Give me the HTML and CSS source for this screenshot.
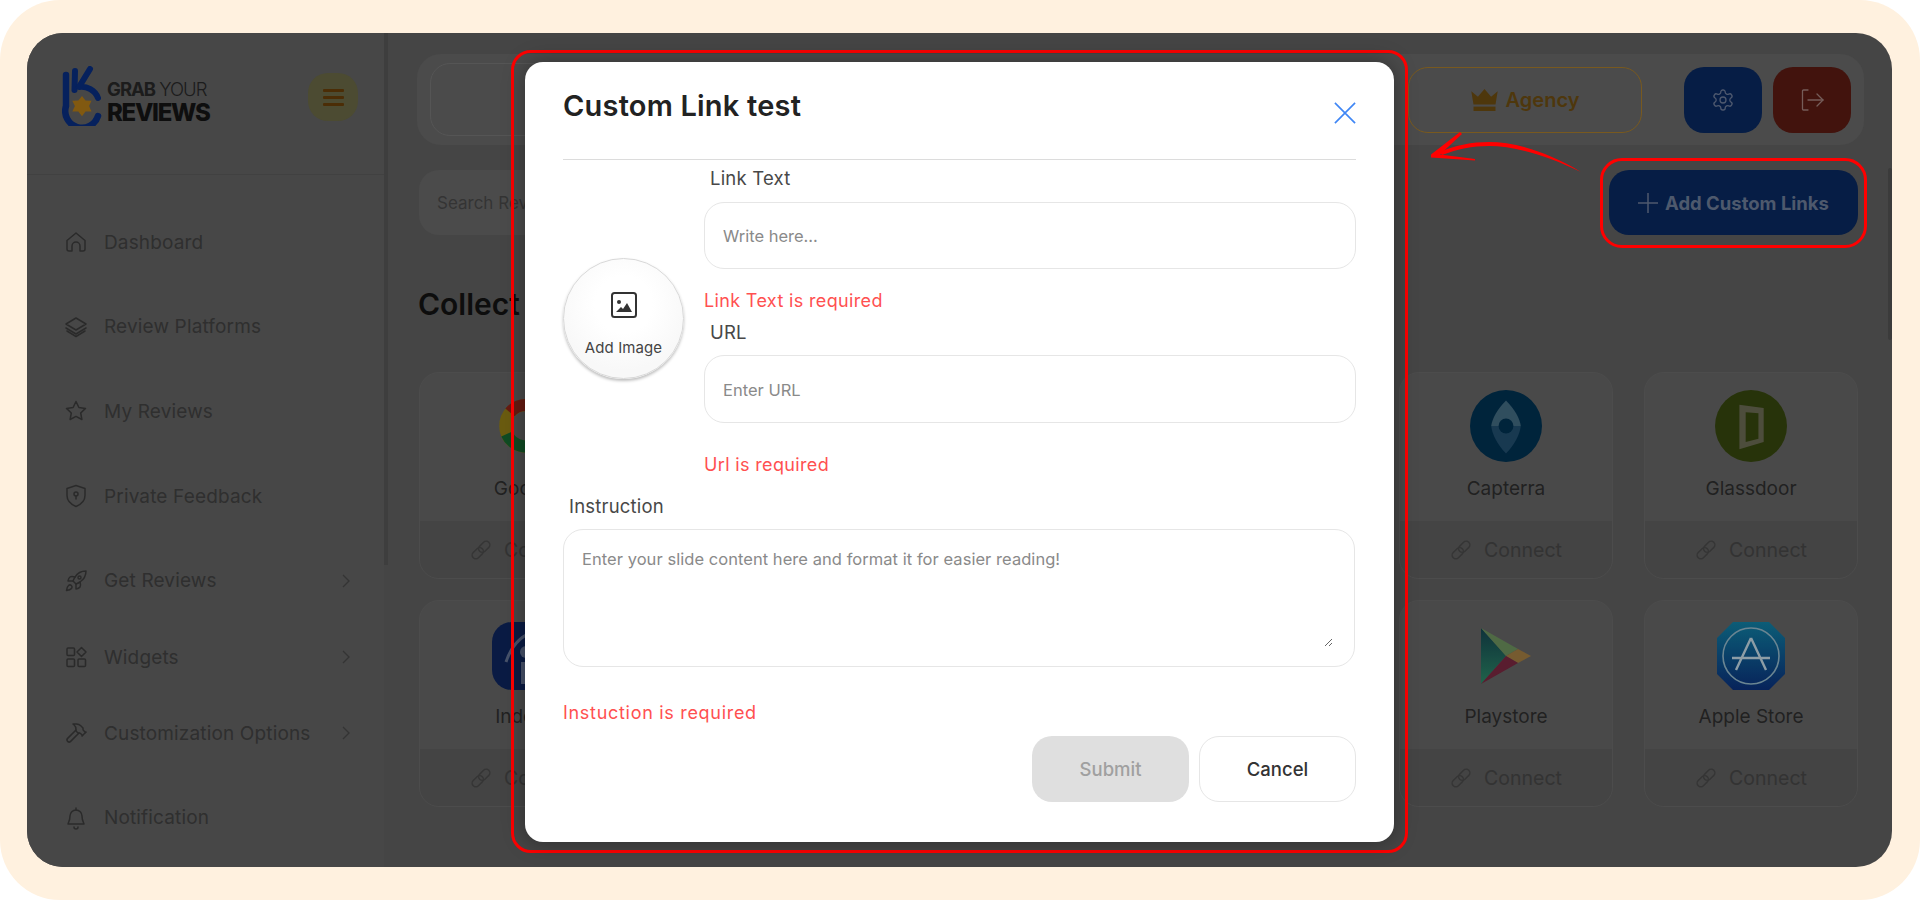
FILE: index.html
```html
<!DOCTYPE html>
<html lang="en">
<head>
<meta charset="utf-8">
<title>Custom Link</title>
<link rel="stylesheet" href="styles.css">
</head>
<body>
<div class="canvas">
  <div class="frame">
    <aside class="sidebar">
      <div class="brand">
        <div class="logo">
          <svg class="logo-mark" viewBox="0 0 40 60" fill="none">
            <path d="M4 9V40A16.5 16.5 0 0 0 36 50" stroke="#08286f" stroke-width="6.5" stroke-linecap="round"/>
            <path d="M13 5L12.500 24" stroke="#08286f" stroke-width="6" stroke-linecap="round"/>
            <path d="M28 3L17 21C25 20 33 24 36 32" stroke="#08286f" stroke-width="6" stroke-linecap="round" stroke-linejoin="round"/>
            <path d="M20 30l3.500 4.500 6 .3-2.400 5.200 2.400 5.400-6 .2-3.500 4.600-3.700-4.600-6-.2 2.600-5.400-2.600-5.200 6-.3z" fill="#9a6a14"/>
          </svg>
          <div class="logo-text">
            <div class="logo-top"><b>GRAB</b> YOUR</div>
            <div class="logo-bottom">REVIEWS</div>
          </div>
        </div>
        <div class="burger"><span></span><span></span><span></span></div>
      </div>
      <nav class="menu">
        <div class="menu-item"><svg class="ico" viewBox="0 0 24 24"><path d="M3 10.5 12 3l9 7.5V19a2 2 0 0 1-2 2h-3v-5a4 4 0 0 0-8 0v5H5a2 2 0 0 1-2-2z"/></svg><span>Dashboard</span></div>
        <div class="menu-item"><svg class="ico" viewBox="0 0 24 24"><path d="M12 3 2 9l10 6 10-6z"/><path d="M2 13l10 6 10-6"/><path d="M3 16l9 5.500 9-5.500"/></svg><span>Review Platforms</span></div>
        <div class="menu-item"><svg class="ico" viewBox="0 0 24 24"><path d="M12 2.500l2.900 6 6.600.9-4.800 4.600 1.200 6.500L12 17.400l-5.900 3.100 1.200-6.500L2.500 9.400l6.600-.9z"/></svg><span>My Reviews</span></div>
        <div class="menu-item"><svg class="ico" viewBox="0 0 24 24"><path d="M12 1.500l9 3v7c0 5-3.700 8.800-9 11-5.300-2.200-9-6-9-11v-7z"/><circle cx="12" cy="10" r="2"/><path d="M12 12v3"/></svg><span>Private Feedback</span></div>
        <div class="menu-item"><svg class="ico" viewBox="0 0 24 24"><path d="M4.500 16.500c-1.500 1.260-2 5-2 5s3.740-.5 5-2c.71-.84.7-2.130-.09-2.910a2.180 2.180 0 0 0-2.910-.09z"/><path d="m12 15-3-3a22 22 0 0 1 2-3.950A12.880 12.880 0 0 1 22 2c0 2.720-.78 7.500-6 11a22.350 22.350 0 0 1-4 2z"/><path d="M9 12H4s.55-3.030 2-4c1.620-1.080 5 0 5 0"/><path d="M12 15v5s3.030-.55 4-2c1.080-1.620 0-5 0-5"/><circle cx="15.500" cy="8.500" r="1.500"/></svg><span>Get Reviews</span><svg class="chev" viewBox="0 0 10 16"><path d="M2 2l6 6-6 6"/></svg></div>
        <div class="menu-item menu-near"><svg class="ico" viewBox="0 0 24 24"><rect x="3" y="3" width="7.500" height="7.500" rx="1"/><path d="M17.500 2.500l4.500 4.500-4.500 4.500L13 7z"/><rect x="3" y="14" width="7.500" height="7.500" rx="1"/><rect x="14" y="14" width="7.500" height="7.500" rx="1"/></svg><span>Widgets</span><svg class="chev" viewBox="0 0 10 16"><path d="M2 2l6 6-6 6"/></svg></div>
        <div class="menu-item menu-nearer"><svg class="ico" viewBox="0 0 24 24"><path d="m15 12-8.373 8.373a1 1 0 1 1-3-3L12 9"/><path d="m18 15 4-4"/><path d="m21.500 11.500-1.914-1.914A2 2 0 0 1 19 8.172V7l-2.260-2.260a6 6 0 0 0-4.202-1.756L9 2.960l.92.82A6.180 6.180 0 0 1 12 8.400V10l2 2h1.172a2 2 0 0 1 1.414.586L18.500 14.500"/></svg><span>Customization Options</span><svg class="chev" viewBox="0 0 10 16"><path d="M2 2l6 6-6 6"/></svg></div>
        <div class="menu-item"><svg class="ico" viewBox="0 0 24 24"><path d="M6 10a6 6 0 0 1 12 0c0 5 2 7 2 8H4c0-1 2-3 2-8"/><path d="M12 2v2"/><path d="M10 21a2 2 0 0 0 4 0"/></svg><span>Notification</span></div>
      </nav>
      <div class="side-thumb"></div>
    </aside>
    <main class="main">
      <header class="topbar">
        <div class="top-field"></div>
        <div class="agency">
          <svg class="crown" viewBox="0 0 24 20"><path d="M0 2l6 5 6-7 6 7 6-5-2 12H2z"/><rect x="2" y="16" width="20" height="4"/></svg>
          <span>Agency</span>
        </div>
        <div class="square-btn square-blue"><svg class="ico-btn" viewBox="0 0 24 24"><path d="M12.220 2h-.44a2 2 0 0 0-2 2v.18a2 2 0 0 1-1 1.730l-.43.25a2 2 0 0 1-2 0l-.15-.08a2 2 0 0 0-2.730.73l-.22.38a2 2 0 0 0 .73 2.730l.15.1a2 2 0 0 1 1 1.720v.51a2 2 0 0 1-1 1.740l-.15.09a2 2 0 0 0-.73 2.730l.22.38a2 2 0 0 0 2.730.73l.15-.08a2 2 0 0 1 2 0l.43.25a2 2 0 0 1 1 1.730V20a2 2 0 0 0 2 2h.44a2 2 0 0 0 2-2v-.18a2 2 0 0 1 1-1.730l.43-.25a2 2 0 0 1 2 0l.15.08a2 2 0 0 0 2.730-.73l.22-.39a2 2 0 0 0-.73-2.730l-.15-.08a2 2 0 0 1-1-1.740v-.5a2 2 0 0 1 1-1.740l.15-.09a2 2 0 0 0 .73-2.730l-.22-.38a2 2 0 0 0-2.730-.73l-.15.08a2 2 0 0 1-2 0l-.43-.25a2 2 0 0 1-1-1.730V4a2 2 0 0 0-2-2z"/><circle cx="12" cy="12" r="3"/></svg></div>
        <div class="square-btn square-red"><svg class="ico-btn" viewBox="0 0 24 24"><path d="M8 2H3.500a1 1 0 0 0-1 1v18a1 1 0 0 0 1 1H8"/><path d="M8 12h15"/><path d="M17 6l6 6-6 6"/></svg></div>
      </header>
      <div class="toolbar">
        <div class="search">Search Reviews</div>
        <div class="add-btn"><svg class="plus" viewBox="0 0 20 20"><path d="M10 0v20M0 10h20"/></svg><span>Add Custom Links</span></div>
      </div>
      <h1 class="heading">Collect Reviews</h1>
      <section class="cards">
        <article class="card col-a">
          <div class="card-body">
            <svg class="logo-ic" viewBox="-11 -11 90 90" fill="none"><circle cx="34" cy="34" r="26" stroke="#7f6d14" stroke-width="15"/><path d="M14 17A26 26 0 0 1 56 20" stroke="#7a2015" stroke-width="15"/><path d="M10 44A26 26 0 0 0 54 50" stroke="#145a2a" stroke-width="15"/></svg>
            <div class="card-name">Google</div>
          </div>
          <div class="card-foot"><svg class="link" viewBox="0 0 24 24"><g transform="rotate(-45 12 12)"><rect x="0" y="8" width="14" height="8" rx="4"/><rect x="10" y="8" width="14" height="8" rx="4"/></g></svg><span>Connect</span></div>
        </article>
        <article class="card col-e">
          <div class="card-body">
            <svg class="logo-ic" viewBox="0 0 68 68"><circle cx="34" cy="34" r="34" fill="#002b47"/><path d="M34 10C42 18 47 27 48 34H20C21 27 26 18 34 10z" fill="#3a5d70"/><path d="M34 60C42 52 47 42 48 34H20C21 42 26 52 34 60z" fill="#1d4560"/><circle cx="34" cy="34" r="7" fill="#002b47"/></svg>
            <div class="card-name">Capterra</div>
          </div>
          <div class="card-foot"><svg class="link" viewBox="0 0 24 24"><g transform="rotate(-45 12 12)"><rect x="0" y="8" width="14" height="8" rx="4"/><rect x="10" y="8" width="14" height="8" rx="4"/></g></svg><span>Connect</span></div>
        </article>
        <article class="card col-f">
          <div class="card-body">
            <svg class="logo-ic" viewBox="0 0 68 68"><circle cx="34" cy="34" r="34" fill="#2f3d0c"/><path d="M23 14l23 3v32l-23 7z" fill="#5c5c48"/><path d="M29 21l12 1v24l-12 3z" fill="#2f3d0c"/></svg>
            <div class="card-name">Glassdoor</div>
          </div>
          <div class="card-foot"><svg class="link" viewBox="0 0 24 24"><g transform="rotate(-45 12 12)"><rect x="0" y="8" width="14" height="8" rx="4"/><rect x="10" y="8" width="14" height="8" rx="4"/></g></svg><span>Connect</span></div>
        </article>
        <article class="card col-a">
          <div class="card-body">
            <svg class="logo-ic" viewBox="-2 -4 72 72"><rect width="68" height="68" rx="20" fill="#0d2152"/><path d="M14 40C20 22 32 10 50 8" fill="none" stroke="#55627f" stroke-width="3"/><circle cx="34" cy="30" r="6" fill="#55627f"/><rect x="29" y="40" width="10" height="22" fill="#55627f"/></svg>
            <div class="card-name">Indeed</div>
          </div>
          <div class="card-foot"><svg class="link" viewBox="0 0 24 24"><g transform="rotate(-45 12 12)"><rect x="0" y="8" width="14" height="8" rx="4"/><rect x="10" y="8" width="14" height="8" rx="4"/></g></svg><span>Connect</span></div>
        </article>
        <article class="card col-e">
          <div class="card-body">
            <svg class="logo-ic" viewBox="-2 -4 72 72">
              <defs><linearGradient id="pg" x1="0" y1="0" x2="0" y2="1"><stop offset="0" stop-color="#123c46"/><stop offset="1" stop-color="#27775a"/></linearGradient></defs>
              <path d="M9 6L34 34 9 62z" fill="url(#pg)"/><path d="M9 6L46 27 34 34z" fill="#5f7f52"/><path d="M46 27L59 34 46 41 34 34z" fill="#8d6d3a"/><path d="M9 62L46 41 34 34z" fill="#6a2338"/>
            </svg>
            <div class="card-name">Playstore</div>
          </div>
          <div class="card-foot"><svg class="link" viewBox="0 0 24 24"><g transform="rotate(-45 12 12)"><rect x="0" y="8" width="14" height="8" rx="4"/><rect x="10" y="8" width="14" height="8" rx="4"/></g></svg><span>Connect</span></div>
        </article>
        <article class="card col-f">
          <div class="card-body">
            <svg class="logo-ic" viewBox="-2 -4 72 72" fill="none">
              <defs><linearGradient id="ag" x1="0" y1="0" x2="0" y2="1"><stop offset="0" stop-color="#0f6f8e"/><stop offset="1" stop-color="#092a6c"/></linearGradient></defs>
              <path d="M16 0H52L68 16V52L52 68H16L0 52V16z" fill="url(#ag)"/>
              <circle cx="34" cy="34" r="28" stroke="#7f9fae" stroke-width="1.600"/>
              <path d="M34 16L19 48M34 16L49 48M15 36H53" stroke="#a8bcc6" stroke-width="2.400"/>
            </svg>
            <div class="card-name">Apple Store</div>
          </div>
          <div class="card-foot"><svg class="link" viewBox="0 0 24 24"><g transform="rotate(-45 12 12)"><rect x="0" y="8" width="14" height="8" rx="4"/><rect x="10" y="8" width="14" height="8" rx="4"/></g></svg><span>Connect</span></div>
        </article>
      </section>
      <div class="scroll-thumb"></div>
    </main>
    <div class="dim"></div>
  </div>

  <div class="ring ring-modal"></div>
  <div class="ring ring-add"></div>
  <svg class="arrow" viewBox="0 0 165 55">
    <path d="M157 47C122 26 90 17 65 17C48 17 32 20 16 27L18 30C34 24 48 21 65 21C90 21 122 30 157 47z"/>
    <path d="M36 7L7 29.500 7 32.500 51 35.500 51 34 16 29.500 38 9z"/>
  </svg>

  <div class="modal">
    <div class="modal-head">
      <h2 class="modal-title">Custom Link test</h2>
      <svg class="close" viewBox="0 0 24 24"><path d="M1 1l22 22M23 1L1 23"/></svg>
    </div>
    <div class="modal-top">
      <div class="uploader">
        <div class="uploader-glow">
          <svg class="img-ic" viewBox="0 0 26 26"><rect x="1" y="1" width="24" height="24" rx="2.500" class="img-frame"/><circle cx="8" cy="10" r="2" class="img-fill"/><path d="M5 20l5-5 2 2 4-6 5 9z" class="img-fill"/></svg>
        </div>
        <div class="uploader-text">Add Image</div>
      </div>
      <div class="fields">
        <label class="label">Link Text</label>
        <input class="input input-first" placeholder="Write here...">
        <p class="error error-link">Link Text is required</p>
        <label class="label label-url">URL</label>
        <input class="input input-second" placeholder="Enter URL">
        <p class="error error-url">Url is required</p>
      </div>
    </div>
    <label class="label label-ins">Instruction</label>
    <div class="area-box"><textarea class="area" placeholder="Enter your slide content here and format it for easier reading!"></textarea></div>
    <p class="error error-ins">Instuction is required</p>
    <div class="actions">
      <button class="btn btn-submit" type="button">Submit</button>
      <button class="btn btn-cancel" type="button">Cancel</button>
    </div>
  </div>
</div>
</body>
</html>
```
FILE: styles.css
```css
* { box-sizing: border-box; }
html, body { margin: 0; padding: 0; background: #fff; }
body { font-family: "Inter", "Noto Sans", sans-serif; width: 1920px; height: 900px; overflow: hidden; }

.canvas {
  position: relative;
  width: 1920px;
  height: 900px;
  background: #fff1df;
  border-radius: 60px;
  padding: 33px 28px 33px 27px;
  overflow: hidden;
}
.frame {
  position: relative;
  display: flex;
  height: 834px;
  border-radius: 36px;
  overflow: hidden;
  background: #535353;
}
.dim { position: absolute; inset: 0; background: rgba(0, 0, 0, 0.16); }

/* sidebar */
.sidebar {
  width: 357px;
  flex: none;
  background: #555;
  position: relative;
}
.side-thumb { position: absolute; left: 100%; top: 0; width: 4px; height: 532px; background: #4a4a4a; }
.brand {
  height: 142px;
  border-bottom: 1px solid #4e4e4e;
  display: flex;
  justify-content: space-between;
  padding: 33px 26px 0 35px;
}
.logo { display: flex; align-items: flex-start; gap: 5px; }
.logo-mark { width: 40px; height: 60px; }
.logo-text { color: #1c1c1c; padding-top: 12px; }
.logo-top { font-size: 18.500px; line-height: 22px; letter-spacing: -1px; font-weight: 300; color: #222; }
.logo-top b { font-weight: 700; }
.logo-bottom { font-size: 24px; line-height: 25px; font-weight: 800; letter-spacing: -1.300px; color: #111; }
.burger {
  width: 50px;
  height: 48px;
  margin-top: 7px;
  border-radius: 20px;
  background: #5b5a3c;
  display: flex;
  flex-direction: column;
  justify-content: center;
  align-items: center;
  gap: 4px;
}
.burger span { width: 21px; height: 3px; background: #5a3608; border-radius: 1px; }

.menu { display: flex; flex-direction: column; gap: 60.700px; padding: 55px 33px 0 37px; }
.menu-item {
  display: flex;
  align-items: center;
  height: 24px;
  font-size: 19px;
  letter-spacing: 0.15px;
  color: #383838;
}
.menu-item span { margin-left: 16px; flex: 1; white-space: nowrap; }
.menu-near { margin-top: -8px; }
.menu-nearer { margin-top: -9px; }
.ico { width: 24px; height: 24px; flex: none; fill: none; stroke: #333; stroke-width: 1.500; stroke-linejoin: round; stroke-linecap: round; }
.chev { width: 10px; height: 16px; flex: none; fill: none; stroke: #3f3f3f; stroke-width: 1.400; }

/* main */
.main { flex: 1; min-width: 0; padding: 21px 28px 0 29px; position: relative; margin-left: 4px; }
.topbar {
  display: flex;
  align-items: center;
  height: 91px;
  background: #5a5a5a;
  border-radius: 24px;
  padding: 0 13px 0 13px;
}
.top-field { flex: 1; height: 73px; border: 1px solid #666; border-radius: 20px; margin-right: 20px; }
.agency {
  width: 234px;
  height: 66px;
  border: 1px solid #8f6a25;
  border-radius: 20px;
  display: flex;
  align-items: center;
  justify-content: center;
  gap: 8px;
  font-size: 20px;
  font-weight: 600;
  color: #5e420f;
  margin-right: 42px;
}
.crown { width: 27px; height: 22px; fill: #5e420f; }
.square-btn { width: 78px; height: 66px; border-radius: 20px; display: flex; align-items: center; justify-content: center; }
.square-blue { background: #082353; margin-right: 11px; }
.square-red { background: #4f1710; }
.ico-btn { width: 24px; height: 24px; fill: none; stroke-width: 1.300; stroke: #5d6a84; stroke-linejoin: round; stroke-linecap: round; }
.square-red .ico-btn { stroke: #8c6f6a; }

.toolbar { display: flex; justify-content: space-between; margin-top: 25px; padding: 0 6px 0 2px; }
.search {
  width: 560px;
  height: 65px;
  border-radius: 20px;
  background: #5a5a5a;
  color: #3f3f3f;
  font-size: 17px;
  display: flex;
  align-items: center;
  padding-left: 18px;
}
.add-btn {
  width: 249px;
  height: 65px;
  border-radius: 20px;
  background: #082353;
  color: #5e6b82;
  font-size: 18.500px;
  font-weight: 700;
  display: flex;
  align-items: center;
  justify-content: center;
  gap: 7px;
}
.plus { width: 20px; height: 20px; fill: none; stroke: #5e6b82; stroke-width: 1.500; }

.heading { margin: 51px 0 0 1px; height: 36px; font-size: 30px; line-height: 36px; font-weight: 600; color: #101010; }

.cards {
  display: grid;
  grid-template-columns: repeat(6, 1fr);
  column-gap: 31px;
  row-gap: 21px;
  margin-top: 50px;
  padding: 0 6px 0 2px;
}
.col-a { grid-column: 1; }
.col-e { grid-column: 5; }
.col-f { grid-column: 6; }
.card {
  height: 207px;
  border: 1px solid #5b5b5b;
  border-radius: 20px;
  overflow: hidden;
  background: #585858;
  display: flex;
  flex-direction: column;
}
.card-body { flex: 1; display: flex; flex-direction: column; align-items: center; padding-top: 17px; }
.logo-ic { width: 72px; height: 72px; flex: none; }
.card-name { margin-top: 15px; font-size: 19px; line-height: 24px; color: #282828; white-space: nowrap; }
.card-foot {
  height: 57px;
  background: #515151;
  display: flex;
  align-items: center;
  justify-content: center;
  gap: 12px;
  font-size: 19.500px;
  color: #3d3d3d;
}
.link { width: 22px; height: 22px; fill: none; stroke: #404040; stroke-width: 1.600; }
.scroll-thumb { position: absolute; right: 0; top: 135px; width: 4px; height: 172px; background: #474747; border-radius: 2px; }

/* annotations */
.ring { position: absolute; border: 3px solid #f00; border-radius: 20px; pointer-events: none; }
.ring-modal { left: 511px; top: 50px; width: 897px; height: 803px; }
.ring-add { left: 1600px; top: 158px; width: 267px; height: 90px; border-radius: 22px; }
.arrow { position: absolute; left: 1424px; top: 125px; width: 165px; height: 55px; fill: #f00; }

/* modal */
.modal {
  position: absolute;
  left: 525px;
  top: 62px;
  width: 869px;
  height: 780px;
  background: #fff;
  border-radius: 18px;
  padding: 0 38px;
  box-shadow: 0 0 22px rgba(0, 0, 0, 0.35);
}
.modal-head {
  height: 98px;
  border-bottom: 1px solid #dcdcdc;
  display: flex;
  justify-content: space-between;
}
.modal-title { margin: 27px 0 0 0; font-size: 29px; line-height: 34px; font-weight: 600; color: #222; letter-spacing: 0.2px; }
.close { width: 22px; height: 22px; margin: 40px 0 0 0; fill: none; stroke: #3f86f5; stroke-width: 1.800; }
.modal-top { display: flex; align-items: flex-start; }
.uploader {
  width: 121px;
  height: 121px;
  margin-top: 98px;
  margin-right: 20px;
  flex: none;
  border-radius: 50%;
  border: 1px solid #d8d8d8;
  background: radial-gradient(circle at 50% 38%, #fff 30%, #f8f8f8 70%);
  box-shadow: 0 2px 3px rgba(0, 0, 0, 0.25);
  display: flex;
  flex-direction: column;
  align-items: center;
}
.uploader-glow {
  width: 48px;
  height: 58px;
  margin-top: 17px;
  border-radius: 50%;
  background: #fff;
  display: flex;
  align-items: center;
  justify-content: center;
}
.img-ic { width: 26px; height: 26px; }
.img-frame { fill: none; stroke: #333; stroke-width: 2; }
.img-fill { fill: #333; }
.uploader-text { margin-top: 4px; font-size: 15px; line-height: 20px; color: #444; font-weight: 400; letter-spacing: 0.1px; white-space: nowrap; }

.fields { flex: 1; min-width: 0; display: flex; flex-direction: column; padding-top: 7px; }
.label { display: block; font-size: 18.500px; line-height: 22px; color: #484848; font-weight: 400; letter-spacing: 0.2px; margin-left: 6px; }
.input {
  display: block;
  width: 100%;
  height: 67px;
  border: 1px solid #e6e6e6;
  border-radius: 20px;
  padding: 0 18px;
  font: 400 16.500px "Inter", sans-serif;
  color: #333;
  background: #fff;
  outline: none;
}
.input::placeholder, .area::placeholder { color: #8a8a8a; opacity: 1; }
.input-first { margin-top: 13px; }
.input-second { margin-top: 12px; height: 68px; padding-top: 2px; }
.label-url { margin-top: 9px; }
.error { margin: 0; font-size: 18px; line-height: 22px; color: #ff5050; font-weight: 400; letter-spacing: 0.35px; }
.error-link { margin-top: 21px; }
.error-url { margin-top: 31px; }
.label-ins { margin-top: 19px; }
.area-box {
  margin-top: 12px;
  width: 792px;
  height: 138px;
  border: 1px solid #e6e6e6;
  border-radius: 20px;
  padding: 17px 21px 0 18px;
}
.area {
  display: block;
  width: 100%;
  height: 100px;
  border: 0;
  padding: 0;
  outline: none;
  resize: vertical;
  font: 400 16.500px/24px "Inter", sans-serif;
  letter-spacing: 0.05px;
  color: #333;
}
.error-ins { margin-top: 35px; letter-spacing: 0.7px; }
.actions { display: flex; justify-content: flex-end; gap: 10px; margin-top: 12px; }
.btn { width: 157px; height: 66px; border-radius: 20px; font: 500 18.500px "Inter", sans-serif; cursor: pointer; }
.btn-submit { background: #dfdfdf; border: 0; color: #a0a0a0; }
.btn-cancel { background: #fff; border: 1px solid #e6e6e6; color: #333; }
```
